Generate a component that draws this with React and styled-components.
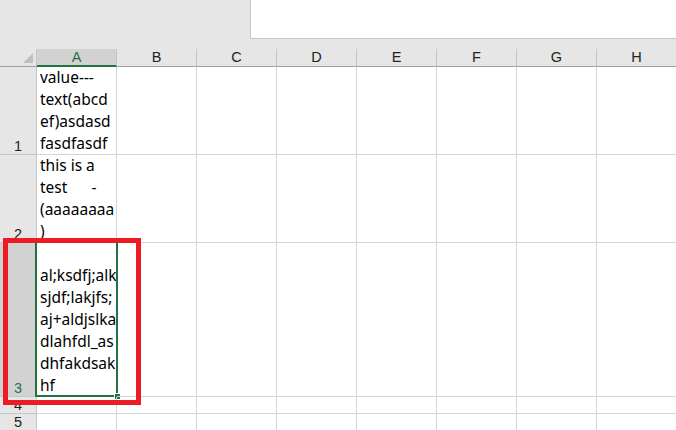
import styled, { createGlobalStyle } from "styled-components";

const GlobalStyle = createGlobalStyle`
  html, body {
    margin: 0;
    padding: 0;
    background: #e6e6e6;
    overflow: hidden;
  }
`;

const columns = ["A", "B", "C", "D", "E", "F", "G", "H"];

const rows = [
  { num: 1, height: 88, lines: ["value---", "text(abcd", "ef)asdasd", "fasdfasdf"] },
  { num: 2, height: 88, lines: ["this is a", "test      -", "(aaaaaaaa", ")"] },
  {
    num: 3,
    height: 154,
    active: true,
    lines: ["al;ksdfj;alk", "sjdf;lakjfs;", "aj+aldjslka", "dlahfdl_as", "dhfakdsak", "hf"],
  },
  { num: 4, height: 17, lines: [] },
  { num: 5, height: 17, lines: [] },
];

const App = () => {
  return (
    <>
      <GlobalStyle />
      <Page>
        <TopBar>
          <FormulaBox />
        </TopBar>
        <Sheet $rows={rows.map((r) => r.height + "px").join(" ")}>
          <Corner>
            <CornerTriangle />
          </Corner>
          {columns.map((col) => (
            <ColHeader key={col} $active={col === "A"}>
              {col}
            </ColHeader>
          ))}
          {rows.map((row) => (
            <Row key={row.num} row={row} />
          ))}
          <Annotation />
        </Sheet>
      </Page>
    </>
  );
};

const Row = ({ row }) => (
  <>
    <RowHeader $active={row.active}>{row.num}</RowHeader>
    {columns.map((col) => (
      <Cell key={col}>
        {col === "A" &&
          row.lines.map((line, i) => <Line key={i}>{line}</Line>)}
        {col === "A" && row.active && (
          <Selection>
            <FillHandle />
          </Selection>
        )}
      </Cell>
    ))}
  </>
);

export default App;

const Page = styled.div`
  width: 676px;
  height: 430px;
  overflow: hidden;
  display: flex;
  flex-direction: column;
  background: #e6e6e6;
`;

const TopBar = styled.div`
  height: 49px;
  flex-shrink: 0;
  display: flex;
  justify-content: flex-end;
  align-items: flex-start;
`;

const FormulaBox = styled.div`
  width: 425px;
  height: 38px;
  background: #ffffff;
  border-left: 1px solid #c6c6c6;
  border-bottom: 1px solid #c6c6c6;
`;

const Sheet = styled.div`
  position: relative;
  display: grid;
  grid-template-columns: 37px repeat(8, 80px);
  grid-template-rows: 18px ${(p) => p.$rows};
  background: #ffffff;
`;

const Corner = styled.div`
  box-sizing: border-box;
  background: #e6e6e6;
  border-right: 1px solid #c6c6c6;
  border-bottom: 1px solid #9f9f9f;
  display: flex;
  justify-content: flex-end;
  align-items: flex-end;
  padding: 0 3px 3px 0;
`;

const CornerTriangle = styled.div`
  width: 0;
  height: 0;
  border-left: 10px solid transparent;
  border-bottom: 10px solid #bfbfbf;
`;

const ColHeader = styled.div`
  box-sizing: border-box;
  background: ${(p) => (p.$active ? "#d2d2d2" : "#e6e6e6")};
  color: ${(p) => (p.$active ? "#217346" : "#222222")};
  border-right: 1px solid #c6c6c6;
  border-bottom: ${(p) => (p.$active ? "2px solid #217346" : "1px solid #9f9f9f")};
  font-family: "Liberation Sans", Arial, sans-serif;
  font-size: 14.5px;
  line-height: 14px;
  display: flex;
  justify-content: center;
  align-items: flex-end;
  padding-bottom: ${(p) => (p.$active ? "1px" : "2px")};
`;

const RowHeader = styled.div`
  box-sizing: border-box;
  background: ${(p) => (p.$active ? "#d2d2d2" : "#e6e6e6")};
  color: ${(p) => (p.$active ? "#217346" : "#222222")};
  border-right: 1px solid #c6c6c6;
  border-bottom: 1px solid #c6c6c6;
  font-family: "Liberation Sans", Arial, sans-serif;
  font-size: 14.5px;
  line-height: 14px;
  display: flex;
  justify-content: center;
  align-items: flex-end;
  padding-bottom: 1px;
`;

const Cell = styled.div`
  position: relative;
  box-sizing: border-box;
  border-right: 1px solid #d4d4d4;
  border-bottom: 1px solid #d4d4d4;
  padding-left: 3px;
  display: flex;
  flex-direction: column;
  justify-content: flex-end;
  font-family: "Noto Sans", "Open Sans", sans-serif;
  font-size: 15.5px;
  line-height: 22px;
  color: #000000;
`;

const Line = styled.span`
  display: block;
  white-space: pre;
`;

const Selection = styled.div`
  position: absolute;
  top: -2px;
  left: -2px;
  right: -2px;
  bottom: -1px;
  border: 2px solid #217346;
  pointer-events: none;
`;

const FillHandle = styled.div`
  position: absolute;
  right: -4px;
  bottom: -4px;
  width: 5px;
  height: 5px;
  background: #217346;
  border-top: 1px solid #ffffff;
  border-left: 1px solid #ffffff;
`;

const Annotation = styled.div`
  position: absolute;
  top: 189px;
  left: 3px;
  width: 138px;
  height: 167px;
  box-sizing: border-box;
  border: 5px solid #ed1c24;
  pointer-events: none;
`;
